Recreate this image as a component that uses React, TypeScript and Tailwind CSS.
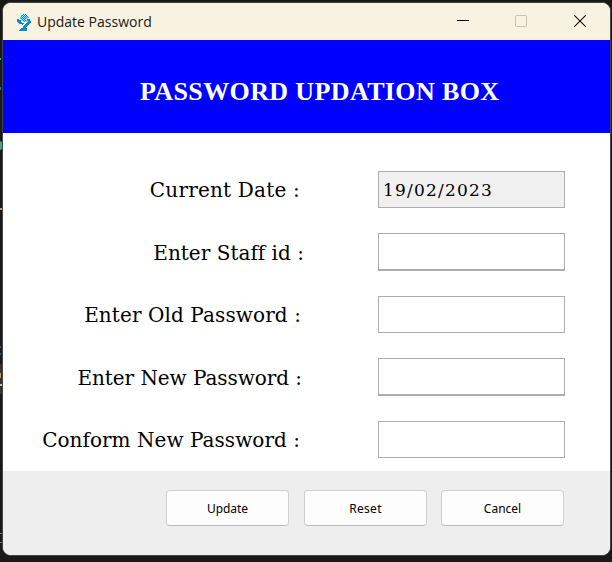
type Field = { label: string; value: string; labelClass: string; inputClass: string };

const fields: Field[] = [
  { label: "Current Date :", value: "19/02/2023", labelClass: "pr-[78px] pt-px tracking-[0.2px]", inputClass: "h-[37px] mb-[25px] bg-[#f0f0f0]" },
  { label: "Enter Staff id :", value: "", labelClass: "pr-[74px] pt-[2px] tracking-[0.02px]", inputClass: "h-[38px] mb-[25px] border-b-2 bg-white" },
  { label: "Enter Old Password :", value: "", labelClass: "pr-[77px] pt-px tracking-[0.1px]", inputClass: "h-[37px] mb-[25px] bg-white" },
  { label: "Enter New Password :", value: "", labelClass: "pr-[76px] pt-[2px] tracking-[-0.06px]", inputClass: "h-[38px] mb-[25px] border-b-2 bg-white" },
  { label: "Conform New Password :", value: "", labelClass: "pr-[78px] pt-px tracking-[0.04px]", inputClass: "h-[37px] bg-white" },
];

function JavaFormIcon() {
  return (
    <svg width="14" height="18" viewBox="0 0 14 18" shapeRendering="crispEdges" fill="#078dcc">
      <path fill="#a5d3dd" d="M4 1h6v2h1v3h-1v2h-4v-1h-2v-2h-1v-2h1z" />
      <path d="M0 5h2v1h2v2h1v1h2v1h-1v1h-1v-1h-3v-1h-1v-1h-1z" />
      <path d="M11 3h1v2h1v2h1v2h-1v1h-1v1h-1v1h-1v1h-1v1h1v3h-8v-1h1v-1h1v-1h2v-2h1v-1h1v-1h1v-1h1v-1h1v-1h-1v-2h2z" />
      <path d="M6 0h1v1h-1zM8 0h1v1h-1zM5 1h1v1h-1zM7 1h1v1h-1zM9 1h1v1h-1zM4 2h1v1h-1zM6 2h1v1h-1zM8 2h1v1h-1zM10 2h1v1h-1zM3 3h1v1h-1zM5 3h1v1h-1zM7 3h1v1h-1zM9 3h1v1h-1zM4 4h1v1h-1zM6 4h1v1h-1zM8 4h1v1h-1zM5 5h1v1h-1zM7 5h1v1h-1zM6 6h1v1h-1zM8 6h1v1h-1zM7 7h1v1h-1z" />
    </svg>
  );
}

function TitleBar() {
  return (
    <header className="flex h-[37px] items-center bg-[#f8f3e0] pl-[14px]">
      <div className="pt-[3px]"><JavaFormIcon /></div>
      <h1 className="ml-[6px] w-[118px] whitespace-nowrap font-['Open_Sans',sans-serif] text-[14px] text-[#191919]">
        Update Password
      </h1>
      <div className="ml-auto flex items-center pr-[24px] pb-px">
        <svg width="12" height="14" viewBox="0 0 12 14" className="mr-[46px]" stroke="#000" shapeRendering="crispEdges">
          <path d="M0 6.5h12" />
        </svg>
        <svg width="12" height="14" viewBox="0 0 12 14" className="mr-[47px]" fill="none" stroke="#c6c2b3">
          <rect x=".5" y="1.5" width="11" height="11" rx="1" />
        </svg>
        <svg width="12" height="14" viewBox="0 0 12 14" stroke="#000" strokeWidth="1.1">
          <path d="M.3 1.3l11.4 11.4M11.7 1.3L.3 12.7" />
        </svg>
      </div>
    </header>
  );
}

function EditorEdge() {
  return (
    <div className="flex w-[2px] shrink-0 flex-col">
      <i className="mt-[56px] h-[2px] w-px bg-[#31b477]" />
      <i className="mt-[27px] h-[3px] w-px bg-[#3b7189]" />
      <i className="mt-[51px] h-[9px] w-[2px] rounded-r bg-[#3fa98e]" />
      <i className="mt-[58px] h-[2px] w-[2px] bg-[#b99b62]" />
      <i className="mt-[136px] h-[2px] w-px bg-[#2b6478]" />
      <i className="mt-[5px] h-[2px] w-px bg-[#2b6478]" />
      <div className="mt-[9px] flex h-[30px] flex-col bg-[#333]">
        <i className="mt-[9px] h-[5px] w-px bg-[#c5974f]" />
        <i className="mt-[6px] h-[2px] w-[2px] bg-[#c8c08c]" />
      </div>
      <i className="mt-[139px] h-px w-[2px] bg-[#777]" />
      <i className="mt-[8px] h-px w-[2px] bg-[#777]" />
    </div>
  );
}

export default function App() {
  return (
    <div className="flex h-[562px] w-[612px] overflow-hidden bg-[#191919] pt-[2px]">
      <EditorEdge />
      <main className="flex h-[554px] w-[609px] shrink-0 flex-col overflow-hidden rounded-[9px] border border-[#444] bg-white">
        <TitleBar />
        <div className="flex h-[93px] shrink-0 items-center bg-[#0000ff] pl-[137px] pt-[10px]">
          <h2 className="whitespace-nowrap font-['Liberation_Serif',serif] text-[26px] leading-none font-bold tracking-[0.38px] text-white">
            PASSWORD UPDATION BOX
          </h2>
        </div>
        <form className="h-[338px] shrink-0 pt-[38px]">
          {fields.map((f) => (
            <label key={f.label} className="flex items-start">
              <span className={`w-[375px] shrink-0 text-right whitespace-nowrap font-['DejaVu_Serif',serif] text-[20px] leading-[36px] text-black ${f.labelClass}`}>
                {f.label}
              </span>
              <input
                readOnly
                value={f.value}
                className={`w-[187px] border border-[#abadb3] px-1 pt-px font-['DejaVu_Serif',serif] text-[17px] tracking-[1.2px] text-black outline-none ${f.inputClass}`}
              />
            </label>
          ))}
        </form>
        <footer className="flex flex-1 items-start bg-[#eeeeee] pt-[19px] pl-[163px] font-['Noto_Sans',sans-serif] text-[12px] text-black">
          <button className="mr-[15px] h-[36px] w-[123px] rounded-[4px] border border-[#d0d0d0] border-b-[#bbb] bg-[#fdfdfd] pt-[2px] tracking-[-0.1px]">Update</button>
          <button className="mr-[14px] h-[36px] w-[123px] rounded-[4px] border border-[#d0d0d0] border-b-[#bbb] bg-[#fdfdfd] pt-[2px] tracking-[0.3px]">Reset</button>
          <button className="h-[36px] w-[123px] rounded-[4px] border border-[#d0d0d0] border-b-[#bbb] bg-[#fdfdfd] pt-[2px]">Cancel</button>
        </footer>
      </main>
    </div>
  );
}
